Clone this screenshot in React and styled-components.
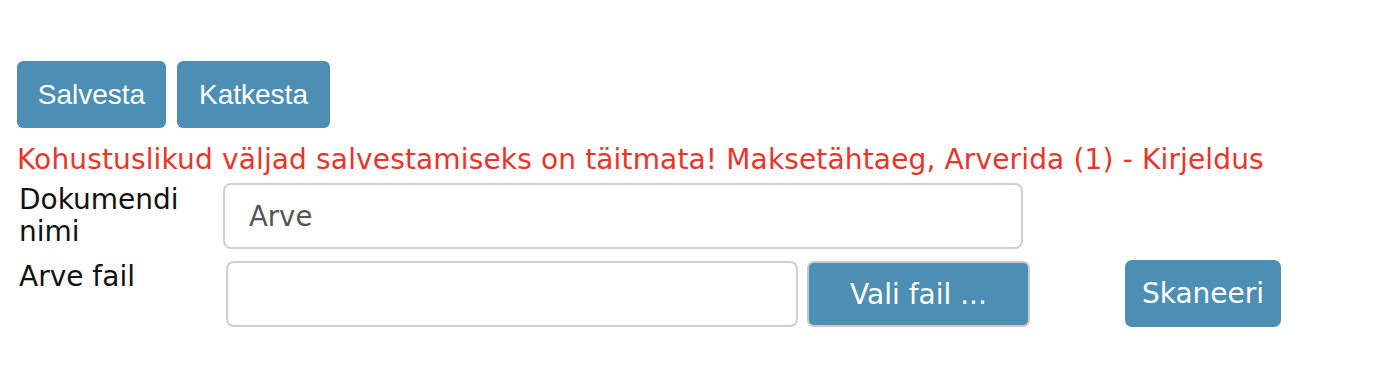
import React from "react";
import styled, { createGlobalStyle } from "styled-components";

const Global = createGlobalStyle`
  html, body { margin: 0; padding: 0; background: #fff; }
  body { font-family: "DejaVu Sans", Verdana, sans-serif; }
`;

const Page = styled.div`
  padding: 61px 0 0 17px;
`;

const Toolbar = styled.div`
  display: flex;
  gap: 11px;
`;

const ToolButton = styled.button`
  width: ${(p) => p.$w}px;
  height: 67px;
  padding: 0;
  border: none;
  border-radius: 6px;
  background: #4d8fb4;
  color: #fff;
  font-family: "Liberation Sans", Arial, sans-serif;
  font-size: 28px;
  cursor: pointer;
`;

const ErrorLine = styled.div`
  margin-top: 15px;
  color: #e8352a;
  font-size: 28px;
  letter-spacing: 0.15px;
  line-height: 34px;
  white-space: nowrap;
`;

const Form = styled.div`
  margin-top: 6px;
  display: flex;
  flex-direction: column;
  gap: 12px;
`;

const Row = styled.div`
  display: flex;
  align-items: flex-start;
`;

const Label = styled.div`
  width: ${(p) => p.$w}px;
  padding-left: 2px;
  padding-top: ${(p) => p.$pt}px;
  font-size: 28px;
  line-height: 32px;
  color: #111;
  box-sizing: border-box;
`;

const Input = styled.div`
  width: ${(p) => p.$w}px;
  height: 66px;
  box-sizing: border-box;
  border: 2px solid #cfcfcf;
  border-radius: 8px;
  padding-left: 24px;
  display: flex;
  align-items: center;
  font-size: 27.5px;
  color: #555;
`;

const FileButton = styled.button`
  margin-left: ${(p) => p.$ml}px;
  margin-top: ${(p) => p.$mt || 0}px;
  width: ${(p) => p.$w}px;
  height: ${(p) => (p.$bordered ? 66 : 67)}px;
  box-sizing: border-box;
  border: ${(p) => (p.$bordered ? "2px solid #c8c8c8" : "none")};
  border-radius: 7px;
  background: #4d8fb4;
  color: #fff;
  font-family: "DejaVu Sans", Verdana, sans-serif;
  font-size: 28px;
  padding: 0;
  cursor: pointer;
`;

export default function App() {
  return (
    <>
      <Global />
      <Page>
        <Toolbar>
          <ToolButton $w={149}>Salvesta</ToolButton>
          <ToolButton $w={153}>Katkesta</ToolButton>
        </Toolbar>
        <ErrorLine>
          Kohustuslikud väljad salvestamiseks on täitmata! Maksetähtaeg, Arverida (1) - Kirjeldus
        </ErrorLine>
        <Form>
          <Row>
            <Label $w={206} $pt={1}>Dokumendi<br />nimi</Label>
            <Input $w={800}>Arve</Input>
          </Row>
          <Row>
            <Label $w={209} $pt={0}>Arve fail</Label>
            <Input $w={572} />
            <FileButton $ml={9} $w={223} $bordered>Vali fail ...</FileButton>
            <FileButton $ml={95} $w={156} $mt={-1}>Skaneeri</FileButton>
          </Row>
        </Form>
      </Page>
    </>
  );
}
